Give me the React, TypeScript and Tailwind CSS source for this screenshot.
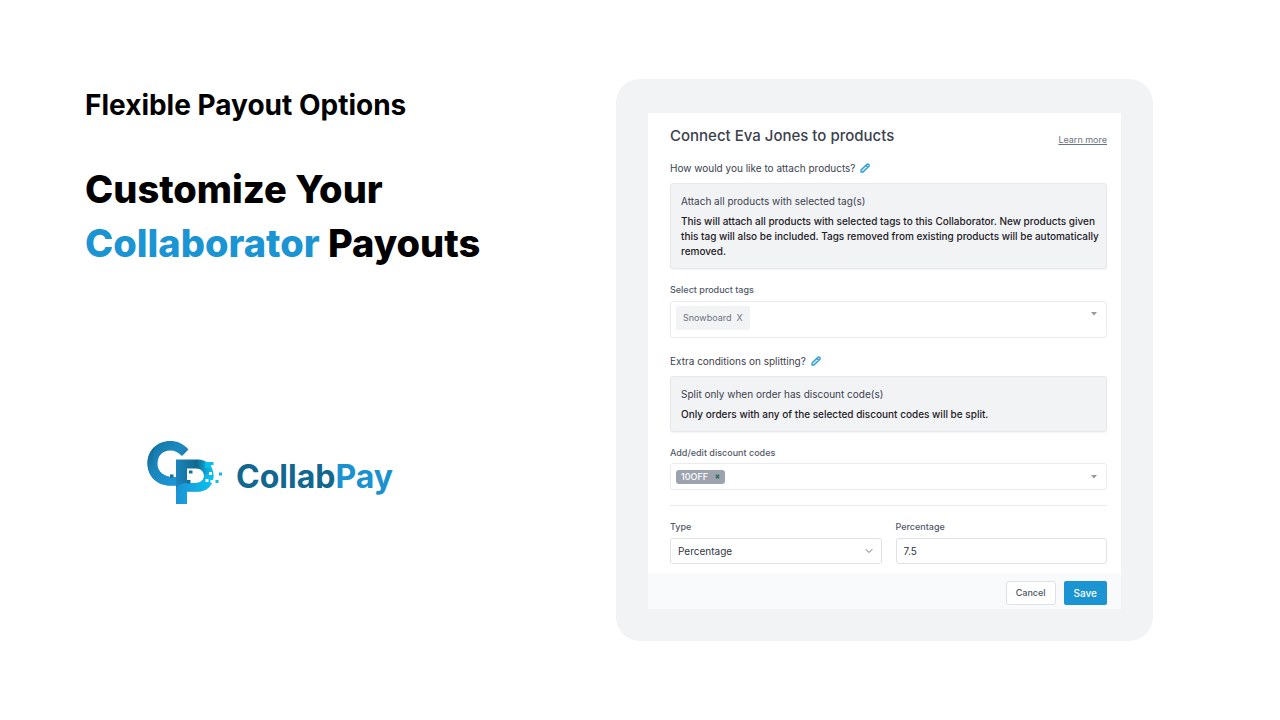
import type { ReactNode } from 'react';
import { ChevronDown } from 'lucide-react';

export default function App() {
  return (
    <main className="flex min-h-screen items-start bg-white pt-[79px] pb-[79px] pl-[85px] pr-[127px] font-['Inter',sans-serif] text-black">
      <section className="flex-1">
        <p className="mt-2 text-[28px] leading-9 font-bold">Flexible Payout Options</p>
        <h1 className="mt-[39px] text-[38px] leading-[54px] font-extrabold">
          Customize Your
          <br />
          <span className="text-[#1a94d2]">Collaborator</span> Payouts
        </h1>
        <Logo />
      </section>

      <section className="w-[51%] max-w-[537px] rounded-3xl bg-[#f2f3f5] px-8 pt-[34px] pb-8">
        <ConnectForm />
      </section>
    </main>
  );
}

const Logo = () => (
  <div className="mt-[165px] ml-[55px] flex items-center">
    <svg viewBox="0 0 90 75" className="h-[75px] w-[90px]" aria-hidden="true">
      <defs>
        <linearGradient id="ring" x1="0" y1="0" x2="1" y2="1">
          <stop offset="0" stopColor="#14709e" />
          <stop offset="0.45" stopColor="#1b8ac2" />
          <stop offset="1" stopColor="#136b98" />
        </linearGradient>
        <linearGradient id="fold" x1="0" y1="0" x2="0.7" y2="1">
          <stop offset="0" stopColor="#0f6690" />
          <stop offset="0.5" stopColor="#1a84b9" />
          <stop offset="1" stopColor="#1c93d4" />
        </linearGradient>
        <linearGradient id="bowl" x1="0" y1="0" x2="1" y2="0">
          <stop offset="0" stopColor="#1b86bd" />
          <stop offset="0.55" stopColor="#11688f" />
          <stop offset="0.8" stopColor="#0fa3d4" />
          <stop offset="1" stopColor="#06c3ee" />
        </linearGradient>
        <linearGradient id="stem" x1="0" y1="0" x2="1" y2="0">
          <stop offset="0" stopColor="#1c92d4" />
          <stop offset="1" stopColor="#04c3f0" />
        </linearGradient>
      </defs>
      <path
        d="M48.500 14.500C43.500 8.500 37 6 30 6C17 6 7.500 15.500 7.500 28.500C7.500 41 17 50.500 30 50.500H36V42H30C23 41 17.500 36 17.500 28.500C17.500 20.500 23 15.500 30 15.500C35 15.500 38.500 17.500 42 21Z"
        fill="url(#ring)"
      />
      <path
        d="M7.500 28.500C7.500 21 11 14 16 11C12 18 12 30 19 36C24 41 29 42 36 42V50.500H30C17 50.500 7.500 41 7.500 28.500Z"
        fill="url(#fold)"
      />
      <path
        d="M36 24.500H58C67 24.500 73.500 31 73.500 40.500C73.500 50 67 56.500 58 56.500H47V48H56C61 48 64 45 64 41C64 37 61 33.500 56 33.500H47V57H36Z"
        fill="url(#bowl)"
      />
      <path
        d="M36 69V58C36 51.500 40 48 46 48H56C61 48 64 45 64 41C67 38 72 38 73.500 40.500C73.500 50 67 56.500 58 56.500H47V69Z"
        fill="url(#stem)"
      />
      <g fill="#08bfe9">
        <path d="M65 27H73.500V30H71V33H65Z" />
        <path d="M79 37.500H82V40.500H79Z" />
        <path d="M75.500 45H78.500V48H75.500Z" />
      </g>
      <g fill="#fff">
        <path d="M69 37H72V40H69Z" />
        <path d="M65.500 44H68.500V47H65.500Z" />
        <path d="M70.500 45H73.500V48H70.500Z" />
        <path d="M29 38.500H34.500V42H29Z" />
      </g>
      <g fill="#11709d">
        <path d="M30 39.500H33.500V42.500H30Z" />
        <path d="M49 35.500H52.500V38.500H49Z" />
        <path d="M47 45H50.500V48.500H47Z" />
      </g>
    </svg>
    <span className="mt-2 ml-1.5 text-[32px] leading-9 font-bold text-[#11678f]">
      Collab<span className="text-[#1b92d0]">Pay</span>
    </span>
  </div>
);

const ConnectForm = () => (
  <form className="bg-white text-[#3b414d]">
    <div className="pt-[11px] pr-3.5 pb-[9px] pl-[22px]">
      <div className="flex items-start justify-between">
        <h2 className="text-[15px] leading-6 font-medium">Connect Eva Jones to products</h2>
        <a href="#learn" className="mt-[9px] text-[9px] leading-3.5 text-[#6b7280] underline">
          Learn more
        </a>
      </div>

      <Question className="mt-3" text="How would you like to attach products?" />
      <OptionCard title="Attach all products with selected tag(s)">
        This will attach all products with selected tags to this Collaborator. New products given this
        tag will also be included. Tags removed from existing products will be automatically removed.
      </OptionCard>

      <FieldLabel htmlFor="tags" className="mt-3.5">
        Select product tags
      </FieldLabel>
      <div className="mt-1 flex h-[37px] items-start rounded-[3px] border border-[#eaebee] px-[5px] pt-1">
        <button
          type="button"
          className="flex h-6 items-center gap-[5px] rounded-xs bg-[#f2f3f5] px-[7px] text-[9px] text-[#6b7280]"
        >
          Snowboard <span>X</span>
        </button>
        <input id="tags" className="h-6 min-w-0 flex-1 outline-none" />
        <Caret label="Show product tags" className="mt-1.5" />
      </div>

      <Question className="mt-[15px]" text="Extra conditions on splitting?" />
      <OptionCard title="Split only when order has discount code(s)">
        Only orders with any of the selected discount codes will be split.
      </OptionCard>

      <FieldLabel htmlFor="codes" className="mt-3.5">
        Add/edit discount codes
      </FieldLabel>
      <div className="mt-[3px] flex h-[27px] items-center rounded-[3px] border border-[#eaebee] px-[5px]">
        <button
          type="button"
          className="flex h-3.5 items-center gap-[7px] rounded-[3px] bg-[#9ca3af] px-[5px] text-[9px] font-medium text-white"
        >
          10OFF
          <svg viewBox="0 0 6 6" className="size-[5px]" aria-hidden="true">
            <path d="M1 1L5 5M5 1L1 5" stroke="#266d51" strokeWidth="1.6" />
          </svg>
        </button>
        <input id="codes" className="h-5 min-w-0 flex-1 outline-none" />
        <Caret label="Show discount codes" />
      </div>

      <hr className="mt-[15px] border-[#eaebee]" />

      <div className="mt-3.5 grid grid-cols-2 gap-3.5">
        <div>
          <FieldLabel htmlFor="type">Type</FieldLabel>
          <div className="relative mt-1">
            <select
              id="type"
              className="block h-[26px] w-full appearance-none rounded-[3px] border border-[#dfe1e6] bg-white px-[7px] text-[10px] text-[#30353f]"
            >
              <option>Percentage</option>
            </select>
            <ChevronDown className="pointer-events-none absolute top-[7px] right-[7px] size-3 text-[#6b7280]" />
          </div>
        </div>
        <div>
          <FieldLabel htmlFor="percentage">Percentage</FieldLabel>
          <input
            id="percentage"
            defaultValue="7.5"
            className="mt-1 block h-[26px] w-full rounded-[3px] border border-[#dfe1e6] px-[7px] text-[10px] text-[#30353f]"
          />
        </div>
      </div>
    </div>

    <div className="flex justify-end gap-2 bg-[#f9fafb] pt-2 pr-3.5 pb-1">
      <button
        type="button"
        className="h-6 rounded-[3px] border border-[#dfe1e6] bg-white px-[9px] text-[9px] font-medium text-[#4b5563]"
      >
        Cancel
      </button>
      <button type="button" className="h-6 rounded-xs bg-[#1a94d2] px-2.5 text-[10px] font-medium text-white">
        Save
      </button>
    </div>
  </form>
);

const Question = ({ text, className }: { text: string; className: string }) => (
  <div className={`flex items-center gap-[5px] ${className}`}>
    <h3 className="text-[10px] leading-4">{text}</h3>
    <button type="button" aria-label="Edit" className="text-[#2b9bd6]">
      <svg viewBox="0 0 20 20" className="size-2.5" fill="none" stroke="currentColor" aria-hidden="true">
        <path
          d="M12 5L16 9M14 2.500A2.900 2.900 0 0 1 18 6.500L6 18H2V14Z"
          fill="#d3ebf7"
          strokeWidth="2.6"
          strokeLinejoin="round"
        />
      </svg>
    </button>
  </div>
);

const OptionCard = ({ title, children }: { title: string; children: ReactNode }) => (
  <div className="mt-[7px] rounded-[3px] border border-[#e6e8eb] bg-[#f2f3f5] pt-[9px] pr-1.5 pb-[9px] pl-2.5 shadow-xs">
    <p className="text-[10px] leading-4">{title}</p>
    <p className="mt-[5px] text-[10px] leading-[15px] font-medium text-[#1d2026]">{children}</p>
  </div>
);

interface FieldLabelProps {
  htmlFor: string;
  className?: string;
  children: ReactNode;
}

const FieldLabel = ({ htmlFor, className = '', children }: FieldLabelProps) => (
  <label htmlFor={htmlFor} className={`block text-[9px] leading-3.5 font-medium text-[#525967] ${className}`}>
    {children}
  </label>
);

const Caret = ({ label, className = '' }: { label: string; className?: string }) => (
  <button type="button" aria-label={label} className={`mr-1 text-[#999] ${className}`}>
    <svg viewBox="0 0 6 4" className="h-1 w-1.5" fill="currentColor" aria-hidden="true">
      <path d="M0 0H6L3 3.500Z" />
    </svg>
  </button>
);
